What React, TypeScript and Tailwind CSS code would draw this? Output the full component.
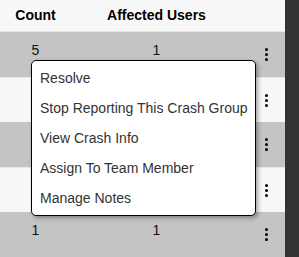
import React from "react"

type Row = {
  count: number
  users: number
}

const rows: Row[] = [
  { count: 5, users: 1 },
  { count: 1, users: 1 },
  { count: 1, users: 1 },
  { count: 1, users: 1 },
  { count: 1, users: 1 },
]

const menuItems = [
  "Resolve",
  "Stop Reporting This Crash Group",
  "View Crash Info",
  "Assign To Team Member",
  "Manage Notes",
]

function Kebab() {
  return (
    <div className="flex flex-col items-center gap-[2px]">
      <span className="w-[3px] h-[3px] rounded-full bg-black" />
      <span className="w-[3px] h-[3px] rounded-full bg-black" />
      <span className="w-[3px] h-[3px] rounded-full bg-black" />
    </div>
  )
}

export default function App() {
  return (
    <div className="flex w-[299px] h-[257px] overflow-hidden font-['Liberation_Sans',Arial,sans-serif] text-[14px] leading-[20px]">
      <div className="relative w-[285px] bg-[#f7f7f7]">
        <div className="flex h-[32px] bg-[#f8f8f8] border-b border-[#e6e6e6] font-bold text-black pt-[5px]">
          <div className="w-[71px] text-center">Count</div>
          <div className="w-[171px] text-center">Affected Users</div>
        </div>
        {rows.map((r, i) => (
          <div
            key={i}
            className={`flex h-[45px] text-[#111] ${i % 2 == 0 ? "bg-[#c4c4c4]" : "bg-[#f7f7f7] border-t border-[#e8e8e8]"}`}
          >
            <div className="w-[71px] text-center pt-[8px]">{r.count}</div>
            <div className="w-[171px] text-center pt-[8px]">{r.users}</div>
            <div className="flex-1 flex items-center justify-center pl-[5px]">
              <Kebab />
            </div>
          </div>
        ))}

        <div className="absolute left-[31px] top-[60px] w-[225px] bg-white border border-black rounded-[5px] py-[2px] shadow-[2px_2px_4px_rgba(0,0,0,0.35)]">
          {menuItems.map(m => (
            <div key={m} className="h-[30px] flex items-center px-[8px] text-[#333] whitespace-nowrap">
              {m}
            </div>
          ))}
        </div>
      </div>
      <div className="w-[14px] bg-[#333333]" />
    </div>
  )
}
